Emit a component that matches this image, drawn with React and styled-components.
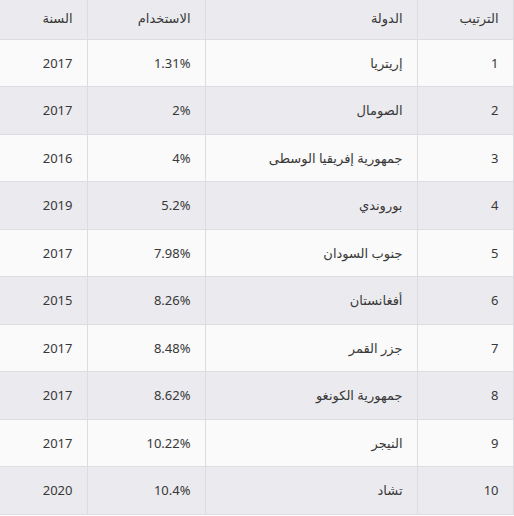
import React from 'react';
import styled, { createGlobalStyle } from 'styled-components';

const GlobalStyle = createGlobalStyle`
  html, body {
    margin: 0;
    padding: 0;
    background: #ffffff;
  }
  body {
    font-family: "Noto Sans", "DejaVu Sans", sans-serif;
  }
`;

const Wrapper = styled.div`
  width: 514px;
  height: 516px;
  overflow: hidden;
  background: #ffffff;
`;

const Table = styled.table`
  direction: rtl;
  border-collapse: collapse;
  table-layout: fixed;
  width: 513px;
  margin-right: 1px;
  font-size: 13px;
  color: #383838;
`;

const HeadCell = styled.th`
  height: 39px;
  padding: 0 14px 2px 14px;
  box-sizing: border-box;
  text-align: right;
  font-weight: 400;
  background: #ebebef;
  border: 1px solid #dcdce1;
  border-top: none;
  width: ${(p) => p.$w}px;
  &:last-child {
    border-left: none;
  }
`;

const Row = styled.tr`
  background: ${(p) => (p.$shade ? '#ebebef' : '#fafafa')};
`;

const Cell = styled.td`
  height: 47.5px;
  padding: 0 14px 0 14px;
  box-sizing: border-box;
  text-align: right;
  border: 1px solid #dcdce1;
  white-space: nowrap;
  &:last-child {
    border-left: none;
  }
`;

const rows = [
  [1, 'إريتريا', '1.31%', 2017],
  [2, 'الصومال', '2%', 2017],
  [3, 'جمهورية إفريقيا الوسطى', '4%', 2016],
  [4, 'بوروندي', '5.2%', 2019],
  [5, 'جنوب السودان', '7.98%', 2017],
  [6, 'أفغانستان', '8.26%', 2015],
  [7, 'جزر القمر', '8.48%', 2017],
  [8, 'جمهورية الكونغو', '8.62%', 2017],
  [9, 'النيجر', '10.22%', 2017],
  [10, 'تشاد', '10.4%', 2020],
];

export default function App() {
  return (
    <Wrapper>
      <GlobalStyle />
      <Table>
        <thead>
          <tr>
            <HeadCell $w={96}>الترتيب</HeadCell>
            <HeadCell $w={212}>الدولة</HeadCell>
            <HeadCell $w={118}>الاستخدام</HeadCell>
            <HeadCell $w={87}>السنة</HeadCell>
          </tr>
        </thead>
        <tbody>
          {rows.map((r, i) => (
            <Row key={r[0]} $shade={i % 2 === 1}>
              <Cell>{r[0]}</Cell>
              <Cell>{r[1]}</Cell>
              <Cell dir="ltr">{r[2]}</Cell>
              <Cell>{r[3]}</Cell>
            </Row>
          ))}
        </tbody>
      </Table>
    </Wrapper>
  );
}
